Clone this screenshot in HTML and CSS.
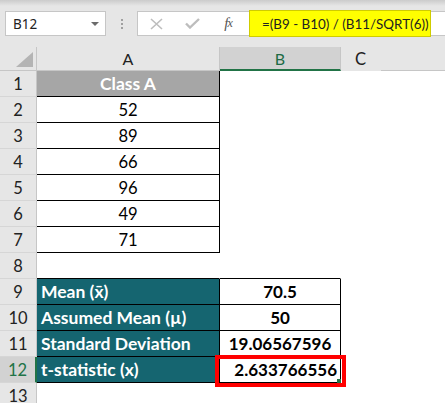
FILE: index.html
```html
<!DOCTYPE html>
<html>
<head>
<meta charset="utf-8">
<link rel="stylesheet" href="styles.css">
</head>
<body>
<div class="toolbar">
  <div class="namebox"><span>B12</span><span class="dd"></span></div>
  <div class="sep"><i></i><i></i><i></i></div>
  <div class="fbar">
    <span class="slot"><svg width="13" height="12" viewBox="0 0 13 12"><path d="M1 1L12 11M12 1L1 11" stroke="#bdbdbd" stroke-width="1.6" fill="none"/></svg></span>
    <span class="slot"><svg width="15" height="11" viewBox="0 0 15 11"><path d="M1 5.5L5 9.5L14 1" stroke="#bdbdbd" stroke-width="2.4" fill="none"/></svg></span>
    <span class="slot fx"><i>f</i><i class="x">x</i></span>
    <div class="formula">=(B9 - B10) / (B11/SQRT(6))</div>
  </div>
</div>

<div class="sheet">
  <div class="hdr">
    <div class="corner"><span class="tri"></span></div>
    <div class="ch a">A</div>
    <div class="ch b sel">B</div>
    <div class="ch c">C</div>
    <div class="ch rest"></div>
  </div>

  <div class="row"><div class="rh">1</div><div class="c a head bb br">Class A</div><div class="c b"></div></div>
  <div class="row"><div class="rh">2</div><div class="c a bb br">52</div><div class="c b"></div></div>
  <div class="row"><div class="rh">3</div><div class="c a bb br">89</div><div class="c b"></div></div>
  <div class="row"><div class="rh">4</div><div class="c a bb br">66</div><div class="c b"></div></div>
  <div class="row"><div class="rh">5</div><div class="c a bb br">96</div><div class="c b"></div></div>
  <div class="row"><div class="rh">6</div><div class="c a bb br">49</div><div class="c b"></div></div>
  <div class="row"><div class="rh">7</div><div class="c a bb br">71</div><div class="c b"></div></div>
  <div class="row"><div class="rh">8</div><div class="c a bb"></div><div class="c b bb"></div></div>
  <div class="row"><div class="rh">9</div><div class="c a lbl bb br">Mean (x̄)</div><div class="c b val bb br">70.5</div></div>
  <div class="row"><div class="rh">10</div><div class="c a lbl bb br">Assumed Mean (µ)</div><div class="c b val bb br">50</div></div>
  <div class="row"><div class="rh">11</div><div class="c a lbl bb br">Standard Deviation</div><div class="c b val bb br">19.06567596</div></div>
  <div class="row"><div class="rh sel">12</div><div class="c a lbl bb br">t-statistic (x)</div><div class="c b val right bb br active">2.633766556<span class="hl"></span><span class="fill"></span></div></div>
  <div class="row"><div class="rh">13</div><div class="c a"></div><div class="c b"></div></div>
</div>
</body>
</html>
```

FILE: styles.css
```css
* { box-sizing: border-box; }
html, body { margin: 0; padding: 0; }
body {
  width: 445px;
  height: 403px;
  overflow: hidden;
  background: linear-gradient(#cbcbcb 0, #e6e6e6 6px) no-repeat, #e6e6e6;
  font-family: Lato, "Liberation Sans", sans-serif;
  color: #000;
}

/* formula toolbar */
.toolbar {
  display: flex;
  height: 25px;
  margin-top: 11px;
  padding-left: 5px;
}
.namebox {
  width: 101px;
  background: #fff;
  border: 1px solid #c6c6c6;
  display: flex;
  align-items: center;
  justify-content: space-between;
  padding: 0 6px 0 7px;
  font-family: "Noto Sans", sans-serif;
  font-size: 13.5px;
  color: #222;
}
.dd {
  width: 0; height: 0;
  border-left: 4px solid transparent;
  border-right: 4px solid transparent;
  border-top: 4px solid #6b6b6b;
}
.sep {
  width: 31px;
  display: flex;
  flex-direction: column;
  align-items: center;
  justify-content: center;
  gap: 2px;
}
.sep i {
  display: block;
  width: 2px; height: 2px;
  background: #a0a0a0;
}
.fbar {
  flex: 1;
  display: flex;
  align-items: center;
  background: #fff;
  border: 1px solid #c6c6c6;
  border-right: none;
}
.slot {
  width: 36px;
  display: flex;
  justify-content: center;
  align-items: center;
}
.fx {
  font-family: "Liberation Serif", serif;
  font-style: italic;
  color: #555;
  font-size: 15px;
  letter-spacing: -1px;
}
.fx i { font-style: italic; }
.fx .x { font-size: 12px; }
.formula {
  align-self: stretch;
  margin: -2px 0 -2px 3px;
  width: 182px;
  background: #ffff00;
  border: 1px solid #cfcc00;
  display: flex;
  align-items: center;
  padding-left: 12px;
  font-size: 13.4px;
  color: #222;
  white-space: nowrap;
}

/* sheet */
.sheet { margin-top: 11px; }
.hdr {
  display: flex;
  height: 24px;
  background: #e6e6e6;
}
.corner {
  width: 37px;
  border-right: 1px solid #c6c6c6;
  border-bottom: 1px solid #c6c6c6;
  display: flex;
  align-items: flex-end;
  justify-content: flex-end;
  padding: 0 3px 3px 0;
}
.tri {
  width: 0; height: 0;
  border-left: 17px solid transparent;
  border-bottom: 15px solid #b4b4b4;
}
.ch {
  border-right: 1px solid #c6c6c6;
  border-bottom: 1px solid #c6c6c6;
  display: flex;
  align-items: center;
  justify-content: center;
  font-size: 16px;
  color: #222;
}
.ch.a { width: 183px; }
.ch.b { width: 121px; }
.ch.c { width: 40px; }
.ch.rest { flex: 1; border-right: none; }
.ch.sel {
  background: #d2d2d2;
  color: #1d6b45;
  border-bottom: 2px solid #217346;
}

.row {
  display: flex;
  height: 26px;
  background: #fff;
}
.rh {
  width: 37px;
  background: #e6e6e6;
  border-right: 1px solid #c6c6c6;
  border-bottom: 1px solid #d6d6d6;
  display: flex;
  align-items: center;
  justify-content: center;
  font-size: 16.5px;
  color: #222;
}
.rh.sel {
  background: #d2d2d2;
  color: #217346;
  border-right: 2px solid #217346;
}
.c {
  border-right: 1px solid transparent;
  border-bottom: 1px solid transparent;
  display: flex;
  align-items: center;
  justify-content: center;
  font-size: 16.6px;
  white-space: nowrap;
}
.c.a { width: 183px; }
.c.b { width: 121px; }
.bb { border-bottom-color: #000; }
.br { border-right-color: #000; }
.head {
  background: #a6a6a6;
  color: #fff;
  font-weight: 700;
  font-size: 17.5px;
}
.lbl {
  background: #156570;
  color: #fff;
  font-weight: 700;
  font-size: 17.5px;
  justify-content: flex-start;
  padding-left: 4px;
}
.val { font-weight: 700; font-size: 17px; }
.right { justify-content: flex-end; padding-right: 3px; }
.active { position: relative; }
.hl {
  position: absolute;
  top: -2px; left: -5px; right: -6px; bottom: -5px;
  border: 4px solid #ff0000;
}
.fill {
  position: absolute;
  right: -1px; bottom: -1px;
  width: 4px; height: 4px;
  background: #217346;
}
```
